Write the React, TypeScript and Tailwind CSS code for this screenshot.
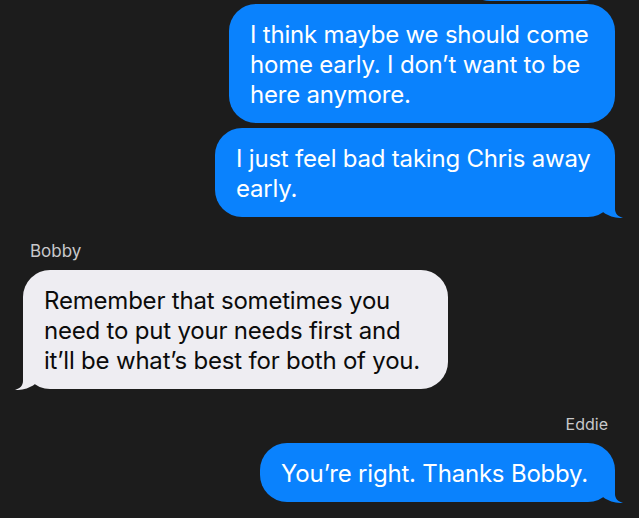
import React from 'react';

const blue = 'bg-[#0a82fd]';

function SentTail() {
  return (
    <svg
      className="absolute right-[-8px] bottom-[-1px]"
      width="20"
      height="28"
      viewBox="0 0 20 28"
    >
      <path d="M0 0H12V19C12 23.5 15 26.5 20 28C14 28.3 6 26.8 0 22Z" fill="#0a82fd" />
    </svg>
  );
}

function ReceivedTail() {
  return (
    <svg
      className="absolute left-[-8px] bottom-[-1px] -scale-x-100"
      width="20"
      height="28"
      viewBox="0 0 20 28"
    >
      <path d="M0 0H12V19C12 23.5 15 26.5 20 28C14 28.3 6 26.8 0 22Z" fill="#eeedf2" />
    </svg>
  );
}

function Sent({ lines, width, tail }: { lines: string[]; width: string; tail?: boolean }) {
  return (
    <div className="flex justify-end">
      <div className={`relative ${width} ${blue} rounded-[27px] pl-[21px] pr-[26px] pt-[16px] pb-[13px] text-white`}>
        {lines.map((l) => (
          <div key={l} className="whitespace-nowrap">{l}</div>
        ))}
        {tail && <SentTail />}
      </div>
    </div>
  );
}

export default function App() {
  return (
    <div className="h-screen overflow-hidden bg-[#1c1c1c] font-['Inter',sans-serif] text-[24px] leading-[30px] tracking-[-0.2px] pl-[23px] pr-[24px]">
      {/* tail end of the previous message */}
      <div className="flex justify-end pr-[6px] -mt-[57px]">
        <div className={`w-[146px] h-[58px] rounded-[27px] ${blue}`} />
      </div>

      <div className="mt-[3px] flex flex-col gap-[5px]">
        <Sent
          width="w-[386px]"
          lines={['I think maybe we should come', 'home early. I don’t want to be', 'here anymore.']}
        />
        <Sent width="w-[400px]" tail lines={['I just feel bad taking Chris away', 'early.']} />
      </div>

      <div className="mt-[24px] pl-[7px] text-[17px] leading-[20px] tracking-normal text-[#c8c8cb]">Bobby</div>
      <div className="mt-[9px] flex">
        <div className="relative w-[425px] rounded-[27px] bg-[#eeedf2] pl-[21px] pr-[23px] pt-[16px] pb-[13px] text-[#0b0b0b]">
          <div className="whitespace-nowrap">Remember that sometimes you</div>
          <div className="whitespace-nowrap">need to put your needs first and</div>
          <div className="whitespace-nowrap">it’ll be what’s best for both of you.</div>
          <ReceivedTail />
        </div>
      </div>

      <div className="mt-[25px] pr-[7px] text-right text-[16px] leading-[20px] tracking-normal text-[#c8c8cb]">Eddie</div>
      <div className="mt-[9px]">
        <Sent width="w-[355px]" tail lines={['You’re right. Thanks Bobby.']} />
      </div>
    </div>
  );
}
